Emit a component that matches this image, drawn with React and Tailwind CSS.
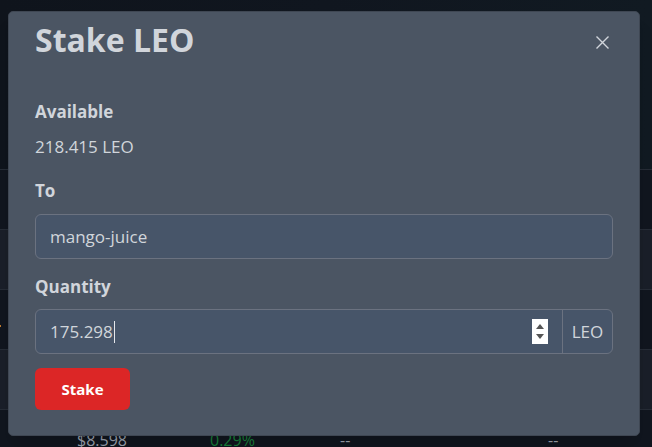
const font = { fontFamily: '"Open Sans", "Liberation Sans", sans-serif' };

function BgRow({ tone, children }) {
  return (
    <div className={`h-[60px] border-t border-[#262c36] flex items-center ${tone}`}>{children}</div>
  );
}

function Field({ label, children, className = '' }) {
  return (
    <div className={className}>
      <div className="text-[17px] leading-[24px] font-bold text-[#d1d5db]">{label}</div>
      {children}
    </div>
  );
}

export default function App() {
  return (
    <div className="relative w-[652px] h-[447px] overflow-hidden bg-[#10151e]" style={font}>
      <div className="h-[169px] bg-gradient-to-r from-[#0f141c] via-[#10161f] to-[#111a22]" />
      <BgRow tone="bg-[#11161f]" />
      <BgRow tone="bg-[#1a1f29]" />
      <BgRow tone="bg-[#11161f]">
        <span className="ml-[-3px] w-[4px] h-[2px] bg-[#c27a2c] mt-[12px]" />
      </BgRow>
      <BgRow tone="bg-[#1a1f29]" />
      <BgRow tone="bg-[#11161f]">
        <div className="flex text-[16px] text-[#9ca3af]">
          <span className="ml-[77px] w-[133px]">$8.598</span>
          <span className="w-[130px] text-[#17803a]">0.29%</span>
          <span className="w-[208px]">--</span>
          <span>--</span>
        </div>
      </BgRow>

      <div className="absolute left-[8px] top-[11px] w-[632px] h-[425px] rounded-[5px] bg-[#4b5563] border border-[#3f4753] shadow-xl px-[26px] pt-[8px] text-[#d1d5db]">
        <div className="flex items-start justify-between">
          <h1 className="text-[32px] leading-[40px] font-bold text-[#d1d5db]">Stake LEO</h1>
          <button className="mt-[16px] mr-[4px] text-[#d1d5db]">
            <svg width="13" height="13" viewBox="0 0 13 13" fill="none" stroke="currentColor" strokeWidth="1.4">
              <path d="M0.5 0.5 L12.5 12.5 M12.5 0.5 L0.5 12.5" />
            </svg>
          </button>
        </div>

        <Field label="Available" className="mt-[40px]">
          <div className="mt-[11px] text-[17px] leading-[24px]">218.415 LEO</div>
        </Field>

        <Field label="To" className="mt-[20px]">
          <div className="mt-[11px] h-[45px] rounded-[6px] border border-[#6b7280] bg-[#475569] px-[14px] flex items-center text-[17px]">
            mango-juice
          </div>
        </Field>

        <Field label="Quantity" className="mt-[16px]">
          <div className="mt-[10px] h-[45px] rounded-[6px] border border-[#6b7280] bg-[#475569] flex text-[17px]">
            <div className="flex-1 flex items-center pl-[14px] pr-[14px]">
              <span>175.298</span>
              <span className="w-px h-[22px] bg-[#e5e7eb] ml-px" />
              <div className="ml-auto w-[16px] h-[25px] bg-white flex flex-col items-center justify-center gap-[5px]">
                <svg width="8" height="5" viewBox="0 0 8 5"><path d="M4 0 L8 5 L0 5 Z" fill="#555" /></svg>
                <svg width="8" height="5" viewBox="0 0 8 5"><path d="M0 0 L8 0 L4 5 Z" fill="#555" /></svg>
              </div>
            </div>
            <div className="w-[50px] border-l border-[#6b7280] flex items-center justify-center">LEO</div>
          </div>
        </Field>

        <button className="mt-[14px] w-[95px] h-[42px] rounded-[6px] bg-[#dc2626] text-white text-[15px] font-bold">
          Stake
        </button>
      </div>
    </div>
  );
}
